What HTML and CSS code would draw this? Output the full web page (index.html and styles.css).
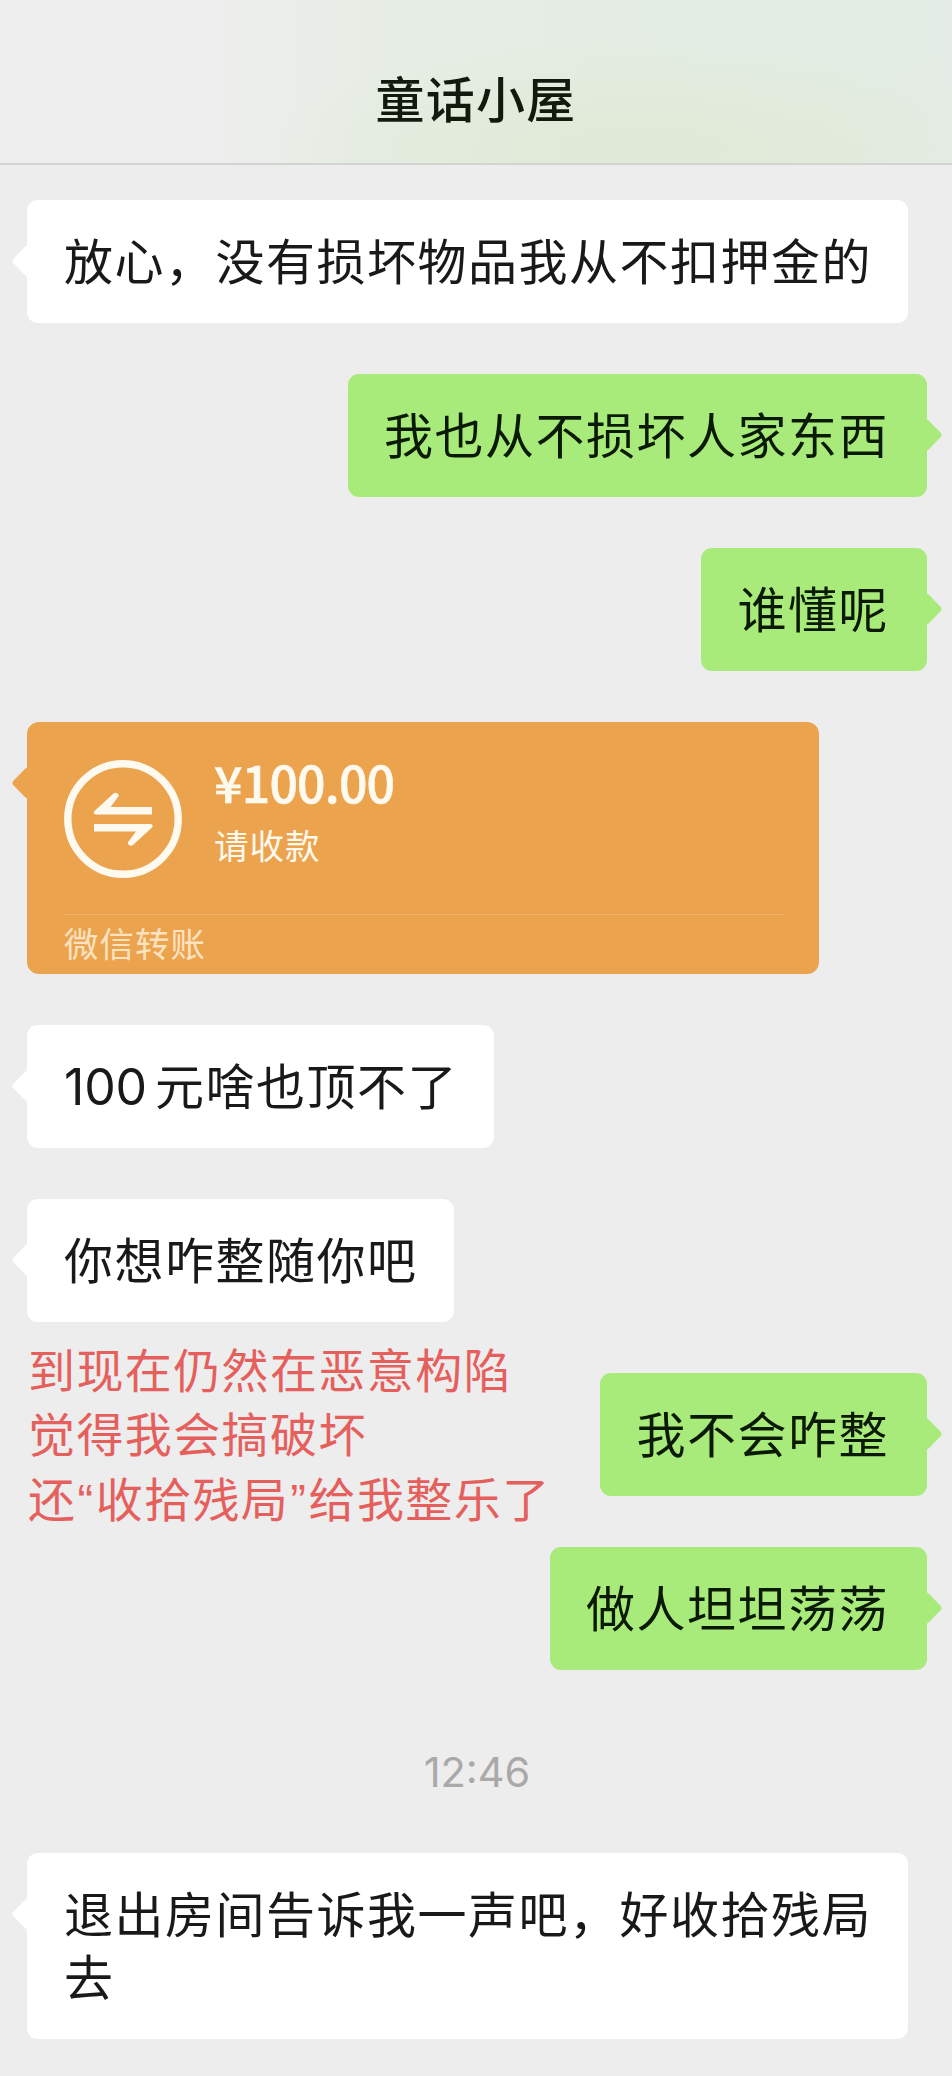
FILE: index.html
```
<!DOCTYPE html>
<html lang="zh-CN">
<head>
<meta charset="utf-8">
<title>童话小屋</title>
<link rel="stylesheet" href="styles.css">
</head>
<body>
<header class="header"><h1 class="title">童话小屋</h1></header>
<main class="chat">
  <div class="row"><div class="bubble">放心，没有损坏物品我从不扣押金的</div></div>
  <div class="row mine"><div class="bubble">我也从不损坏人家东西</div></div>
  <div class="row mine"><div class="bubble">谁懂呢</div></div>
  <div class="row">
    <section class="transfer">
      <div class="transfer-main">
        <svg class="transfer-icon" viewBox="0 0 118 118" width="118" height="118">
          <circle cx="59" cy="59" r="55.2" fill="none" stroke="#fffaf0" stroke-width="7.4"/>
          <path fill="#fffaf0" d="M88 47v7.500H32q-3.500-.5-1.500-3.500L49.500 33.500q2-1.500 4 0t.5 3.500L46.500 47zM30 64h56.500q3.500.5 1.500 3.500L69 85q-2 1.500-4 0t-.5-3.500L72 71.500H30z"/>
        </svg>
        <div class="transfer-text">
          <div class="amount">¥100.00</div>
          <div class="note">请收款</div>
        </div>
      </div>
      <div class="transfer-foot">微信转账</div>
    </section>
  </div>
  <div class="row"><div class="bubble"><span class="num">100</span>元啥也顶不了</div></div>
  <div class="row"><div class="bubble">你想咋整随你吧</div></div>
  <div class="row mine">
    <p class="annotation">到现在仍然在恶意构陷<br>觉得我会搞破坏<br>还<span class="quote">“</span>收拾残局<span class="quote">”</span>给我整乐了</p>
    <div class="bubble">我不会咋整</div>
  </div>
  <div class="row mine"><div class="bubble">做人坦坦荡荡</div></div>
  <time class="time">12:46</time>
  <div class="row"><div class="bubble">退出房间告诉我一声吧，好收拾残局<br>去</div></div>
</main>
</body>
</html>
```
FILE: styles.css
```
* { box-sizing: border-box; }
body {
  margin: 0;
  min-height: 2076px;
  background: #ededed;
  color: #191919;
  font-family: "Noto Sans CJK SC", sans-serif;
}
.header {
  height: 165px;
  padding-top: 60px;
  border-bottom: 2px solid #d2d4d1;
  background:
    radial-gradient(ellipse 380px 110px at 640px 150px, #e1ead8 20%, transparent),
    radial-gradient(ellipse 260px 130px at 800px 20px, #e2ede3 10%, transparent),
    linear-gradient(90deg, #eeeeee 20%, #e6ede4 42%, #e4ebe1 85%, #e5ece6);
}
.title {
  margin: 0;
  text-align: center;
  font-size: 49px;
  line-height: 74px;
  font-weight: 500;
  letter-spacing: 1.200px;
  color: #121a0e;
}
.chat {
  display: flex;
  flex-direction: column;
  gap: 51px;
  padding: 35px 25px 37px 27px;
}
.row { display: flex; align-items: center; }
.mine { justify-content: flex-end; }
.bubble {
  position: relative;
  padding: 27px 36px 33px 37px;
  border-radius: 11px;
  background: #fff;
  font-size: 49px;
  line-height: 63px;
  letter-spacing: 1.500px;
  white-space: nowrap;
}
.mine .bubble {
  padding-left: 36px;
  padding-right: 38px;
  background: #a9eb7b;
  color: #0b1a05;
}
.bubble::before, .transfer::before {
  content: "";
  position: absolute;
  left: -11px;
  top: 49px;
  width: 24px;
  height: 24px;
  border-radius: 4px;
  background: inherit;
  transform: rotate(45deg);
}
.mine .bubble::before { left: auto; right: -11px; }
.num {
  display: inline-block;
  width: 91px;
  font-family: Inter, sans-serif;
  font-size: 50px;
  line-height: 50px;
  letter-spacing: -0.200px;
}
.transfer {
  position: relative;
  width: 792px;
  height: 252px;
  padding: 38px 35px 0 37px;
  border-radius: 12px;
  background: #eca34e;
  color: #fffaf0;
}
.transfer-main { display: flex; gap: 32px; height: 154px; }
.amount {
  height: 50px;
  font-size: 50px;
  line-height: 42px;
  font-weight: 500;
  letter-spacing: -0.800px;
  -webkit-text-stroke: 0.600px currentColor;
}
.note { margin-top: 9px; font-size: 34.500px; line-height: 50px; letter-spacing: 1px; }
.transfer-foot {
  border-top: 1px solid #f0b36c;
  padding-top: 2px;
  font-size: 34.500px;
  line-height: 50px;
  letter-spacing: 1px;
  color: #fbe3c2;
}
.annotation {
  margin: -38px auto -34px 1px;
  font-size: 47px;
  line-height: 64.500px;
  letter-spacing: 1.400px;
  color: #e5605d;
  white-space: nowrap;
}
.quote {
  padding-left: 1px;
  font-family: "Liberation Sans", sans-serif;
  line-height: 1;
  letter-spacing: 2.600px;
}
.time {
  height: 81px;
  padding-top: 22px;
  text-align: center;
  font: 400 41.500px/59px Inter, sans-serif;
  color: #a9a9a9;
}
```
